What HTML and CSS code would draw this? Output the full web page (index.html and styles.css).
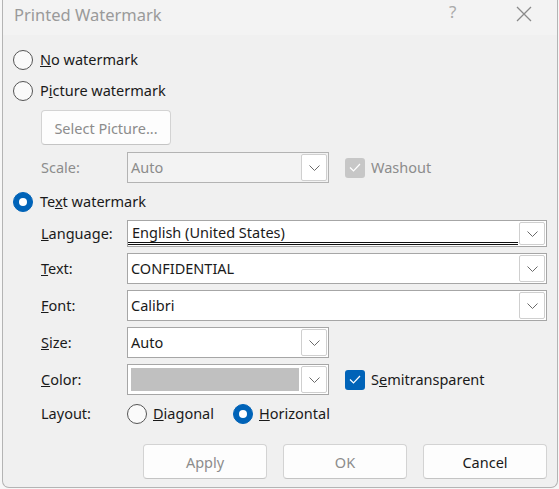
FILE: index.html
```html
<!DOCTYPE html>
<html>
<head>
<meta charset="utf-8">
<link rel="stylesheet" href="styles.css">
</head>
<body>
<div class="dialog">
  <div class="titlebar">
    <span class="title">Printed Watermark</span>
    <span class="help">?</span>
    <span class="close"><svg width="16" height="16" viewBox="0 0 16 16"><path d="M1 1 L15 15 M15 1 L1 15" stroke="#8a8a8a" stroke-width="1.3" fill="none"/></svg></span>
  </div>
  <div class="content">
    <div class="radio-row r-none"><span class="radio"></span><span class="rlabel"><u>N</u>o watermark</span></div>
    <div class="radio-row r-pic"><span class="radio"></span><span class="rlabel">P<u>i</u>cture watermark</span></div>
    <div class="indent">
      <div class="btn select-btn disabled">Select Picture...</div>
      <div class="frow scale-row">
        <span class="flabel disabled">Scale:</span>
        <div class="combo small off"><span class="ctext disabled">Auto</span><span class="dd"><svg width="11" height="6" viewBox="0 0 11 6"><path d="M0.5 0.5 L5.5 5.5 L10.5 0.5" stroke="#6a6a6a" fill="none"/></svg></span></div>
        <span class="check gray"><svg width="12" height="9" viewBox="0 0 12 9"><path d="M1 4.5 L4.5 8 L11 1" stroke="#fff" stroke-width="1.2" fill="none"/></svg></span>
        <span class="clabel disabled">Washout</span>
      </div>
    </div>
    <div class="radio-row r-text"><span class="radio on"></span><span class="rlabel">Te<u>x</u>t watermark</span></div>
    <div class="indent">
      <div class="frow lang-row">
        <span class="flabel"><u>L</u>anguage:</span>
        <div class="combo wide lang"><span class="ctext uline">English (United States)</span><span class="dd"><svg width="11" height="6" viewBox="0 0 11 6"><path d="M0.5 0.5 L5.5 5.5 L10.5 0.5" stroke="#6a6a6a" fill="none"/></svg></span></div>
      </div>
      <div class="frow box-row">
        <span class="flabel"><u>T</u>ext:</span>
        <div class="combo wide"><span class="ctext">CONFIDENTIAL</span><span class="dd"><svg width="11" height="6" viewBox="0 0 11 6"><path d="M0.5 0.5 L5.5 5.5 L10.5 0.5" stroke="#6a6a6a" fill="none"/></svg></span></div>
      </div>
      <div class="frow box-row">
        <span class="flabel"><u>F</u>ont:</span>
        <div class="combo wide"><span class="ctext">Calibri</span><span class="dd"><svg width="11" height="6" viewBox="0 0 11 6"><path d="M0.5 0.5 L5.5 5.5 L10.5 0.5" stroke="#6a6a6a" fill="none"/></svg></span></div>
      </div>
      <div class="frow box-row">
        <span class="flabel"><u>S</u>ize:</span>
        <div class="combo small"><span class="ctext">Auto</span><span class="dd"><svg width="11" height="6" viewBox="0 0 11 6"><path d="M0.5 0.5 L5.5 5.5 L10.5 0.5" stroke="#6a6a6a" fill="none"/></svg></span></div>
      </div>
      <div class="frow box-row">
        <span class="flabel"><u>C</u>olor:</span>
        <div class="combo small"><span class="swatch"></span><span class="dd"><svg width="11" height="6" viewBox="0 0 11 6"><path d="M0.5 0.5 L5.5 5.5 L10.5 0.5" stroke="#6a6a6a" fill="none"/></svg></span></div>
        <span class="check blue"><svg width="12" height="9" viewBox="0 0 12 9"><path d="M1 4.5 L4.5 8 L11 1" stroke="#fff" stroke-width="1.2" fill="none"/></svg></span>
        <span class="clabel">S<u>e</u>mitransparent</span>
      </div>
      <div class="frow layout-row">
        <span class="flabel">Layout:</span>
        <span class="radio"></span><span class="rlabel l-diag"><u>D</u>iagonal</span>
        <span class="radio on"></span><span class="rlabel"><u>H</u>orizontal</span>
      </div>
    </div>
    <div class="buttons">
      <div class="btn disabled">Apply</div>
      <div class="btn disabled">OK</div>
      <div class="btn">Cancel</div>
    </div>
  </div>
</div>
</body>
</html>
```

FILE: styles.css
```css
html, body {
  margin: 0;
  padding: 0;
}
body {
  width: 559px;
  height: 489px;
  overflow: hidden;
  background: #f7f7f7;
  font-family: "Noto Sans", "Open Sans", sans-serif;
  font-size: 14px;
  color: #1a1a1a;
}
.dialog {
  margin-left: 2px;
  width: 554px;
  height: 487px;
  border: 1px solid #b4b4b4;
  border-top: none;
  border-radius: 0 0 7px 7px;
  background: #f0f0f0;
  overflow: hidden;
}
.titlebar {
  height: 35px;
  background: #f3f3f3;
  display: flex;
  align-items: center;
  position: relative;
}
.title {
  margin-left: 11px;
  margin-top: -7px;
  font-size: 16.5px;
  color: #9a9a9a;
}
.help {
  position: absolute;
  left: 446px;
  top: 0px;
  font-size: 17px;
  color: #aaaaaa;
}
.close {
  position: absolute;
  left: 513px;
  top: 6px;
  display: flex;
}
.content {
  display: flex;
  flex-direction: column;
}
.radio-row {
  display: flex;
  align-items: center;
  height: 20px;
  padding-left: 10px;
}
.r-none { margin-top: 15px; }
.r-pic { margin-top: 11px; }
.r-text { margin-top: 9px; }
.radio {
  width: 18px;
  height: 18px;
  border: 1px solid #555;
  border-radius: 50%;
  background: #fafafa;
  flex: none;
  box-sizing: content-box;
  margin-right: 7px;
  position: relative;
}
.radio.on {
  background: #0063b8;
  border-color: #0063b8;
}
.radio.on::after {
  content: "";
  position: absolute;
  left: 5px;
  top: 5px;
  width: 8px;
  height: 8px;
  border-radius: 50%;
  background: #fff;
}
.rlabel {
  font-size: 14.5px;
  line-height: 20px;
  position: relative;
  top: -1px;
}
.indent {
  padding-left: 38px;
  display: flex;
  flex-direction: column;
}
.btn {
  height: 33px;
  border: 1px solid #d3d3d3;
  border-bottom-color: #c4c4c4;
  border-radius: 4px;
  background: #fdfdfd;
  display: flex;
  align-items: center;
  justify-content: center;
  font-size: 14.5px;
  box-sizing: content-box;
}
.select-btn {
  width: 128px;
  margin-top: 9px;
}
.disabled { color: #8c8c8c; }
.frow {
  display: flex;
  align-items: center;
}
.flabel {
  width: 86px;
  flex: none;
  font-size: 14.5px;
  position: relative;
  top: -1px;
}
.scale-row { margin-top: 7px; height: 31px; }
.lang-row { margin-top: 8px; height: 27px; }
.box-row { margin-top: 6px; height: 31px; }
.layout-row { margin-top: 9px; height: 20px; }
.combo {
  height: 100%;
  box-sizing: border-box;
  border: 1px solid #a6a6a6;
  background: #fff;
  display: flex;
  align-items: center;
  position: relative;
}
.combo.off { background: #f3f3f3; border-color: #b3b3b3; }
.combo.small { width: 202px; }
.combo.wide { width: 420px; }
.ctext {
  flex: 1;
  padding-left: 3px;
  font-size: 14.5px;
  line-height: 20px;
  white-space: nowrap;
  overflow: hidden;
  position: relative;
  top: -1px;
}
.lang .ctext {
  padding-left: 4px;
  border-bottom: 3px double #111;
  margin-top: 1px;
  line-height: 19px;
  top: 0;
}
.dd {
  width: 24px;
  align-self: stretch;
  margin: 1px;
  border: 1px solid #cfcfcf;
  border-radius: 2px;
  background: #fff;
  display: flex;
  align-items: center;
  justify-content: center;
  flex: none;
}
.swatch {
  flex: 1;
  align-self: stretch;
  margin: 3px 1px 3px 3px;
  background: #c0c0c0;
}
.check {
  width: 20px;
  height: 20px;
  border-radius: 3px;
  margin-left: 16px;
  margin-right: 6px;
  display: flex;
  align-items: center;
  justify-content: center;
  flex: none;
}
.check.gray { background: #c7c7c7; }
.check.blue { background: #0063b8; }
.clabel { font-size: 14.5px; position: relative; top: -1px; }
.layout-row .radio { margin-right: 6px; }
.l-diag { margin-right: 19px; }
.buttons {
  display: flex;
  gap: 16px;
  margin-top: 20px;
  padding-left: 140px;
}
.buttons .btn { width: 122px; }
```
